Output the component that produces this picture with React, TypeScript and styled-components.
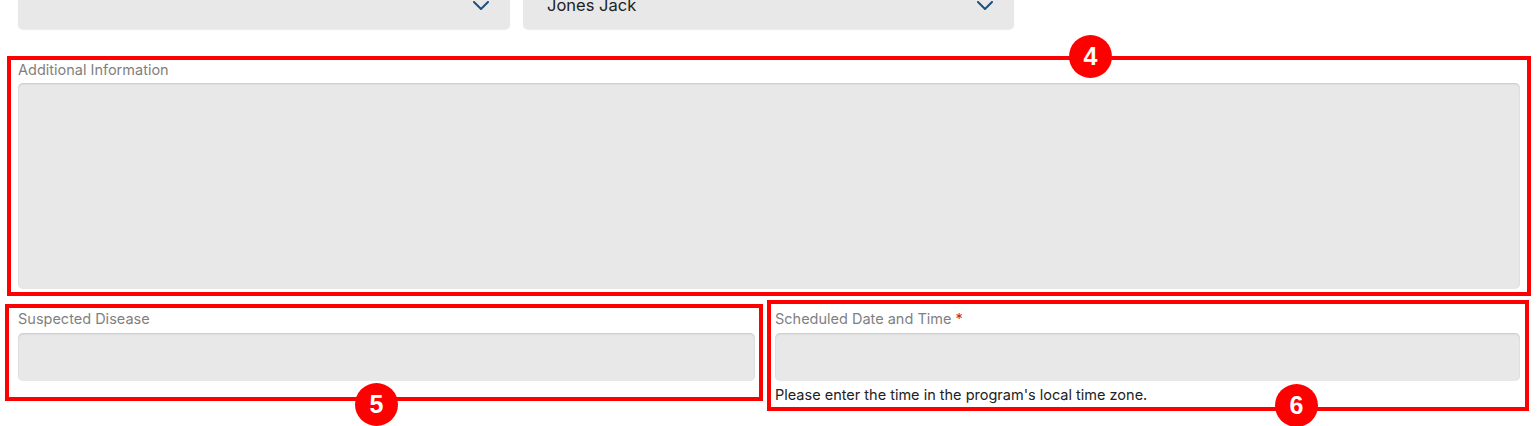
import styled, { createGlobalStyle } from 'styled-components'

const GlobalStyle = createGlobalStyle`
  html {
    overflow: hidden;
  }
  body {
    margin: 0;
    padding: 0;
    background: #ffffff;
    font-family: Inter, "Noto Sans", "Liberation Sans", sans-serif;
  }
  * {
    box-sizing: border-box;
  }
`

const Page = styled.div`
  width: 1540px;
  margin-top: -19px;
  padding-bottom: 15px;
`

const SelectRow = styled.div`
  display: flex;
  gap: 13px;
  padding-left: 18px;
`

const Select = styled.div<{ w: number }>`
  width: ${({ w }) => w}px;
  height: 48px;
  background: #e8e8e8;
  border-radius: 5px;
  box-shadow: 0 1px 1px rgba(0, 0, 0, 0.08);
  display: flex;
  align-items: center;
  justify-content: space-between;
  padding: 0 21px 0 24px;
  font-size: 16.5px;
  color: #222222;
`

const Callout = styled.div<{ w: number; h?: number; mt: number; ml: number; pad: string }>`
  position: relative;
  width: ${({ w }) => w}px;
  ${({ h }) => (h ? `height: ${h}px;` : '')}
  margin-top: ${({ mt }) => mt}px;
  margin-left: ${({ ml }) => ml}px;
  padding: ${({ pad }) => pad};
  border: 4px solid #ff0000;
  flex-shrink: 0;
`

const Badge = styled.div<{ x: number; y: number }>`
  position: absolute;
  left: ${({ x }) => x}px;
  top: ${({ y }) => y}px;
  width: 43px;
  height: 43px;
  border-radius: 50%;
  background: #ff0000;
  color: #ffffff;
  font-family: "Liberation Sans", Arial, sans-serif;
  font-weight: 700;
  font-size: 25px;
  display: flex;
  align-items: center;
  justify-content: center;
  z-index: 2;
`

const Label = styled.div<{ gap: number }>`
  font-size: 14.5px;
  line-height: 20px;
  color: #7f7f7f;
  margin-bottom: ${({ gap }) => gap}px;
  white-space: nowrap;
`

const Required = styled.span`
  color: #d0262b;
`

const Field = styled.div<{ h: number }>`
  height: ${({ h }) => h}px;
  background: #e8e8e8;
  border-radius: 5px;
  box-shadow: inset 0 1px 2px rgba(0, 0, 0, 0.14);
`

const Helper = styled.div`
  margin-top: 5px;
  font-size: 14.5px;
  line-height: 18px;
  color: #222222;
  white-space: nowrap;
`

const BottomRow = styled.div`
  display: flex;
  align-items: flex-start;
`

const Chevron = () => (
  <svg width="16" height="9" viewBox="0 0 16 9" fill="none">
    <path d="M1 1l7 7 7-7" stroke="#1f4f7c" strokeWidth="2" strokeLinecap="round" strokeLinejoin="round" />
  </svg>
)

export default function App() {
  return (
    <>
      <GlobalStyle />
      <Page>
        <SelectRow>
          <Select w={492}>
            <span />
            <Chevron />
          </Select>
          <Select w={491}>
            <span>Jones Jack</span>
            <Chevron />
          </Select>
        </SelectRow>

        <Callout w={1524} mt={27} ml={7} pad="0 7px 3px 7px">
          <Badge x={1058} y={-25}>4</Badge>
          <Label gap={3}>Additional Information</Label>
          <Field h={206} />
        </Callout>

        <BottomRow>
          <Callout w={758} h={97} mt={8} ml={5} pad="1px 4px 0 9px">
            <Badge x={346} y={75}>5</Badge>
            <Label gap={4}>Suspected Disease</Label>
            <Field h={48} />
          </Callout>
          <Callout w={762} h={111} mt={4} ml={4} pad="5px 5px 0 4px">
            <Badge x={504} y={80}>6</Badge>
            <Label gap={4}>
              Scheduled Date and Time <Required>*</Required>
            </Label>
            <Field h={48} />
            <Helper>Please enter the time in the program's local time zone.</Helper>
          </Callout>
        </BottomRow>
      </Page>
    </>
  )
}
